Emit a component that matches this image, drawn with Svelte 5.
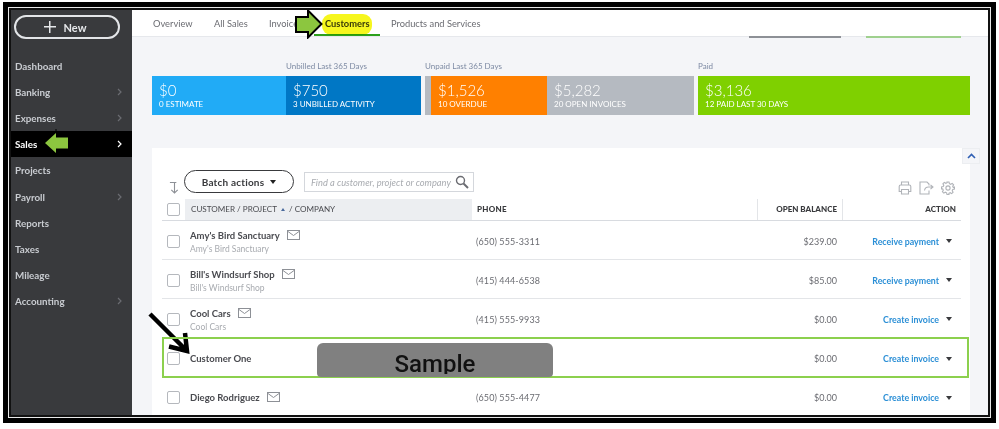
<script>
  const tabs = [
    { label: 'Overview', w: 61 },
    { label: 'All Sales', w: 55 },
    { label: 'Invoices', w: 56 },
    { label: 'Customers', w: 66, active: true },
    { label: 'Products and Services', w: 0 }
  ];
  const nav = [
    { label: 'Dashboard' },
    { label: 'Banking', more: true },
    { label: 'Expenses', more: true },
    { label: 'Sales', more: true, active: true },
    { label: 'Projects' },
    { label: 'Payroll', more: true },
    { label: 'Reports' },
    { label: 'Taxes' },
    { label: 'Mileage' },
    { label: 'Accounting', more: true }
  ];
  const segments = [
    { w: 134, color: '#21abf6', label: '', value: '$0', sub: '0 ESTIMATE' },
    { w: 135, color: '#0077c5', label: 'Unbilled Last 365 Days', value: '$750', sub: '3 UNBILLED ACTIVITY', end: true },
    { w: 6, color: '#b5bac1', label: 'Unpaid Last 365 Days', value: '', sub: '' },
    { w: 116, color: '#ff8000', label: '', value: '$1,526', sub: '10 OVERDUE' },
    { w: 147, color: '#b5bac1', label: '', value: '$5,282', sub: '20 OPEN INVOICES', end: true },
    { w: 272, color: '#7fd000', label: 'Paid', value: '$3,136', sub: '12 PAID LAST 30 DAYS' }
  ];
  const rows = [
    { name: "Amy's Bird Sanctuary", sub: "Amy's Bird Sanctuary", mail: true, phone: '(650) 555-3311', bal: '$239.00', act: 'Receive payment' },
    { name: "Bill's Windsurf Shop", sub: "Bill's Windsurf Shop", mail: true, phone: '(415) 444-6538', bal: '$85.00', act: 'Receive payment' },
    { name: 'Cool Cars', sub: 'Cool Cars', mail: true, phone: '(415) 555-9933', bal: '$0.00', act: 'Create invoice' },
    { name: 'Customer One', sub: '', mail: false, phone: '', bal: '$0.00', act: 'Create invoice' },
    { name: 'Diego Rodriguez', sub: '', mail: true, phone: '(650) 555-4477', bal: '$0.00', act: 'Create invoice' }
  ];
</script>

<div class="page">
  <div class="frame">
    <div class="frame-white">
      <div class="shell">
        <aside class="side">
          <button class="new"><span class="plus"></span>New</button>
          <nav class="nav">
            {#each nav as n}
              <div class="nav-item" class:active={n.active}>
                <span>{n.label}</span>
                {#if n.more}
                  <svg class="chev" width="5" height="8" viewBox="0 0 5 8"><path d="M1 1l3 3-3 3" fill="none" stroke="currentColor" stroke-width="1.2"/></svg>
                {/if}
              </div>
            {/each}
          </nav>
        </aside>

        <main class="main">
          <div class="tabs">
            {#each tabs as t}
              <div class="tab" class:on={t.active} style={t.w ? `width:${t.w}px` : ''}>{t.label}</div>
            {/each}
            <div class="ghost gray"></div>
            <div class="ghost green"></div>
          </div>

          <div class="content">
            <div class="stats">
              {#each segments as s}
                <div class="seg" class:end={s.end} style="width:{s.w}px">
                  <div class="seg-label">{s.label}</div>
                  <div class="seg-box" style="background:{s.color}">
                    <div class="seg-val">{s.value}</div>
                    <div class="seg-sub">{s.sub}</div>
                  </div>
                </div>
              {/each}
            </div>

            <section class="card">
              <button class="collapse" aria-label="collapse">
                <svg width="9" height="6" viewBox="0 0 9 6"><path d="M1 5l3.500-3.500L8 5" fill="none" stroke="#2f5fb3" stroke-width="1.6"/></svg>
              </button>
              <div class="tools">
                <svg class="sort" width="11" height="13" viewBox="0 0 12 14"><path d="M1 1.500h7M6 1.500V13M2.500 9.500L6 13l3.500-3.500" fill="none" stroke="#8d9096" stroke-width="1.2"/></svg>
                <button class="batch">Batch actions<span class="caret dark"></span></button>
                <div class="search">
                  <span class="ph">Find a customer, project or company</span>
                  <svg width="14" height="14" viewBox="0 0 14 14"><circle cx="5.500" cy="5.500" r="4" fill="none" stroke="#6b6c72" stroke-width="1.4"/><path d="M8.500 8.500L13 13" stroke="#6b6c72" stroke-width="2"/></svg>
                </div>
                <div class="icons">
                  <svg width="14" height="14" viewBox="0 0 14 14" fill="none" stroke="#b0b3b8" stroke-width="1.1"><path d="M3.500 4V1h7v3M3.500 10.500H1.200V5.500q0-1.500 1.500-1.500h8.600q1.500 0 1.500 1.500v5h-2.300M3.500 8.500h7v4.500h-7z"/></svg>
                  <svg width="15" height="14" viewBox="0 0 15 14" fill="none" stroke="#b0b3b8" stroke-width="1.1"><path d="M10 9.500V13H1V1h7l2 2v1.500M5.500 9.500q.5-3.500 4-3.500h4M11.500 3.800L14 6l-2.500 2.200"/></svg>
                  <svg width="14" height="14" viewBox="0 0 14 14" fill="none" stroke="#b0b3b8" stroke-width="1.100"><circle cx="7" cy="7" r="2.100"/><path d="M6 1h2l.4 1.700 1.300.6 1.500-.9 1.400 1.400-.9 1.500.6 1.300L13.500 6v2l-1.700.4-.6 1.300.9 1.500-1.400 1.400-1.500-.9-1.300.6L8 13.500H6l-.4-1.700-1.300-.6-1.500.9-1.400-1.400.9-1.500-.6-1.300L.5 8V6l1.700-.4.6-1.300-.9-1.500 1.400-1.400 1.500.9 1.300-.6z"/></svg>
                </div>
              </div>

              <div class="grid head">
                <div class="cell-check"><span class="box"></span></div>
                <div class="th cust">CUSTOMER / PROJECT <span class="up"></span> / COMPANY</div>
                <div class="th phone">PHONE</div>
                <div class="th bal">OPEN BALANCE</div>
                <div class="th act">ACTION</div>
              </div>

              {#each rows as r}
                <div class="grid row">
                  <div class="cell-check"><span class="box"></span></div>
                  <div class="who" class:two={r.sub}>
                    <div class="name">{r.name}
                      {#if r.mail}
                        <svg class="mail" width="13" height="10" viewBox="0 0 13 10" fill="none" stroke="#8d9096" stroke-width="1"><rect x=".5" y=".5" width="12" height="9"/><path d="M1 1.500l5.500 4 5.500-4"/></svg>
                      {/if}
                    </div>
                    {#if r.sub}<div class="subname">{r.sub}</div>{/if}
                  </div>
                  <div class="ph-cell">{r.phone}</div>
                  <div class="bal-cell">{r.bal}</div>
                  <div class="act-cell"><span class="link">{r.act}</span><span class="caret"></span></div>
                </div>
              {/each}
            </section>
          </div>
        </main>

        <div class="hl"></div>
        <svg class="arrow a-tab" width="28" height="30" viewBox="0 0 28 30"><path d="M1 8H13V1.500L26.500 15 13 28.500V23H1z" fill="#8cc63f" stroke="#000" stroke-width="2"/></svg>
        <svg class="arrow a-sales" width="25" height="28" viewBox="0 0 25 28"><path d="M1 14L12 4V8.500H24V19.500H12V24z" fill="#8cc63f"/><path d="M12 0v4M12 24v4" stroke="#000" stroke-width="1"/></svg>
        <svg class="arrow a-black" width="44" height="46" viewBox="0 0 44 46"><path d="M3 2L40 39M22 34.500L40 39 38 21" stroke="#000" stroke-width="4.500" fill="none"/></svg>
        <div class="outline"></div>
        <div class="sample"><span>Sample</span></div>
      </div>
    </div>
  </div>
</div>

<style>
  :global(body) { margin: 0; background: #fff; }
  .page { padding: 2px 3px 0; width: 993px; height: 427px; box-sizing: content-box; overflow: hidden; font-family: Lato, "Open Sans", sans-serif; filter: blur(0.5px); }
  .frame { height: 421px; box-sizing: border-box; border: 5px solid #000; }
  .frame-white { height: 100%; box-sizing: border-box; border: 1px solid #e8e8e8; }
  .shell { position: relative; height: 100%; box-sizing: border-box; border: 2px solid #111; display: flex; overflow: hidden; background: #fff; }

  .side { width: 121px; flex: none; background: #393a3d; color: #d4d7dc; }
  .new { display: flex; align-items: center; justify-content: center; gap: 8px; width: 106px; height: 24px; margin: 5px 0 0 3px; box-sizing: border-box; border: 2px solid #e3e5e8; border-radius: 12px; background: #393a3d; color: #e6e8eb; font: 700 11px Lato, sans-serif; padding: 0 4px 0 0; }
  .plus { width: 12px; height: 12px; background: linear-gradient(#e6e8eb,#e6e8eb) center/100% 1.500px no-repeat, linear-gradient(#e6e8eb,#e6e8eb) center/1.500px 100% no-repeat; }
  .nav { margin-top: 14px; }
  .nav-item { height: 26.100px; display: flex; align-items: center; justify-content: space-between; padding: 0 10px 0 4px; font-size: 9.800px; font-weight: 700; color: #c9ccd1; }
  .nav-item .chev { color: #6b6c72; }
  .nav-item.active { background: #000; color: #fff; }
  .nav-item.active .chev { color: #fff; }

  .main { flex: 1; min-width: 0; background: #f4f5f8; display: flex; flex-direction: column; }
  .tabs { position: relative; height: 26px; flex: none; background: #fff; display: flex; align-items: center; padding-left: 21px; border-bottom: 1px solid #e6e8ec; font-size: 9.300px; color: #6b6c72; }
  .tab { flex: none; white-space: nowrap; padding-top: 1px; }
  .tab.on { position: relative; font-weight: 700; color: #393a3d; }
  .tab.on::after { content: ""; position: absolute; left: -11px; width: 66px; bottom: -7px; height: 2px; background: #2ca01c; }
  .ghost { position: absolute; bottom: -2px; height: 2px; }
  .ghost.gray { left: 617px; width: 92px; background: #8d9096; }
  .ghost.green { left: 734px; width: 95px; background: #9fd08e; }

  .content { padding: 24px 18px 0 20px; flex: 1; min-height: 0; }
  .stats { display: flex; height: 54px; }
  .seg { flex: none; }
  .seg.end { margin-right: 4px; }
  .seg-label { height: 15px; font-size: 8px; line-height: 10px; color: #7d8aa3; white-space: nowrap; }
  .seg-box { height: 39px; box-sizing: border-box; padding: 6px 7px 0; color: #fff; overflow: hidden; white-space: nowrap; }
  .seg-val { font-size: 15px; line-height: 17px; font-weight: 300; }
  .seg-sub { font-size: 8px; line-height: 11px; font-weight: 400; }

  .card { position: relative; margin-top: 33px; background: #fff; height: 280px; padding: 0 9px 0 10px; }
  .collapse { position: absolute; right: -10px; top: 0; width: 18px; height: 16px; padding: 0; border: 1px solid #eceef1; background: #f4f5f8; display: flex; align-items: center; justify-content: center; }
  .tools { position: relative; height: 51px; }
  .sort { position: absolute; left: 7px; top: 33px; }
  .batch { position: absolute; left: 22px; top: 22px; width: 110px; height: 23px; box-sizing: border-box; border: 1px solid #393a3d; border-radius: 12px; background: #fff; color: #393a3d; font: 700 10px Lato, sans-serif; letter-spacing: .2px; display: flex; align-items: center; justify-content: center; gap: 6px; padding: 0; }
  .search { position: absolute; left: 142px; top: 24px; width: 170px; height: 20px; box-sizing: border-box; border: 1px solid #d4d7dc; display: flex; align-items: center; justify-content: space-between; padding: 0 4px 0 6px; }
  .ph { font-size: 9.300px; font-style: italic; color: #a8abb0; white-space: nowrap; }
  .icons { position: absolute; right: 6px; top: 33px; display: flex; gap: 7px; }

  .grid { display: grid; grid-template-columns: 23px 287px 285px 85px 119px; }
  .head { height: 21px; align-items: center; border-bottom: 1px solid #d8dbe0; }
  .th { font-size: 8px; height: 21px; line-height: 21px; white-space: nowrap; color: #393a3d; }
  .th.cust { background: #eceef1; padding-left: 6px; font-size: 8.100px; color: #4a4b50; }
  .th.phone, .th.bal, .th.act { font-weight: 900; }
  .th.phone { padding-left: 5px; letter-spacing: .3px; }
  .th.bal { text-align: right; padding-right: 5px; border-left: 1px solid #e3e5e8; }
  .th.act { text-align: right; padding-right: 5px; border-left: 1px solid #e3e5e8; }
  .up { display: inline-block; width: 0; height: 0; border: 2.500px solid transparent; border-top: 0; border-bottom: 3.500px solid #4a6a9c; margin: 0 2px; vertical-align: 1px; }
  .cell-check { display: flex; align-items: center; padding-left: 5px; }
  .box { width: 13px; height: 13px; box-sizing: border-box; border: 1px solid #b5b8bd; border-radius: 2px; background: #fff; }

  .row { height: 39.200px; padding-top: 2px; border-bottom: 1px solid #e3e5e8; align-items: center; box-sizing: border-box; color: #6b6c72; font-size: 9px; }
  .who { padding-left: 5px; }
  .who.two { padding-top: 3px; }
  .name { font-size: 9.500px; font-weight: 700; color: #4a4b50; display: flex; align-items: center; gap: 7px; line-height: 12px; }
  .mail { margin-top: -2px; }
  .subname { font-size: 8.500px; color: #a8abb0; line-height: 14px; }
  .ph-cell { padding-left: 4px; letter-spacing: .1px; }
  .bal-cell { text-align: right; padding-right: 5px; }
  .act-cell { display: flex; justify-content: flex-end; align-items: center; padding-right: 9px; }
  .link { color: #2b8fd6; font-weight: 700; font-size: 8.800px; margin-right: 7px; }
  .caret { display: inline-block; width: 0; height: 0; border: 3px solid transparent; border-bottom: 0; border-top: 4px solid #393a3d; }
  .caret.dark { border-top-color: #222; }

  .hl { position: absolute; left: 311px; top: 4px; width: 50px; height: 21px; background: #f6f61e; border-radius: 9px; mix-blend-mode: multiply; }
  .arrow { position: absolute; }
  .a-tab { left: 284px; top: -1px; }
  .a-sales { left: 33px; top: 119px; }
  .a-black { left: 136px; top: 302px; }
  .outline { position: absolute; left: 151px; top: 327px; width: 807px; height: 41px; box-sizing: border-box; border: 2px solid #8cd04e; }
  .sample { position: absolute; left: 306px; top: 333px; width: 236px; height: 34px; background: #808080; border-radius: 6px 6px 4px 4px; overflow: hidden; text-align: center; }
  .sample span { display: block; margin-top: 6px; height: 25px; overflow: hidden; font: 500 24px/30px Roboto, sans-serif; color: #111; }
</style>
